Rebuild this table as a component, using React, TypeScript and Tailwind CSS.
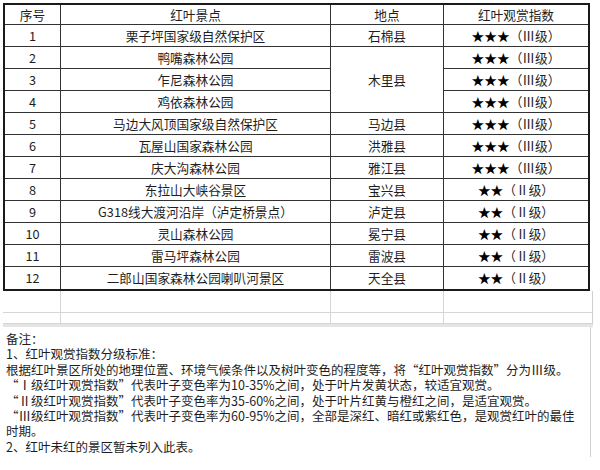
const rows: { no: number; name: string; place?: string; span?: number; stars: string; level: string }[] = [
  { no: 1, name: '栗子坪国家级自然保护区', place: '石棉县', stars: '★★★', level: 'Ⅲ' },
  { no: 2, name: '鸭嘴森林公园', place: '木里县', span: 3, stars: '★★★', level: 'Ⅲ' },
  { no: 3, name: '乍尼森林公园', stars: '★★★', level: 'Ⅲ' },
  { no: 4, name: '鸡依森林公园', stars: '★★★', level: 'Ⅲ' },
  { no: 5, name: '马边大风顶国家级自然保护区', place: '马边县', stars: '★★★', level: 'Ⅲ' },
  { no: 6, name: '瓦屋山国家森林公园', place: '洪雅县', stars: '★★★', level: 'Ⅲ' },
  { no: 7, name: '庆大沟森林公园', place: '雅江县', stars: '★★★', level: 'Ⅲ' },
  { no: 8, name: '东拉山大峡谷景区', place: '宝兴县', stars: '★★', level: 'Ⅱ' },
  { no: 9, name: 'G318线大渡河沿岸（泸定桥景点）', place: '泸定县', stars: '★★', level: 'Ⅱ' },
  { no: 10, name: '灵山森林公园', place: '冕宁县', stars: '★★', level: 'Ⅱ' },
  { no: 11, name: '雷马坪森林公园', place: '雷波县', stars: '★★', level: 'Ⅱ' },
  { no: 12, name: '二郎山国家森林公园喇叭河景区', place: '天全县', stars: '★★', level: 'Ⅱ' },
];

const notes = [
  '备注：',
  '1、红叶观赏指数分级标准：',
  '根据红叶景区所处的地理位置、环境气候条件以及树叶变色的程度等，将“红叶观赏指数”分为Ⅲ级。',
  '“Ⅰ级红叶观赏指数”代表叶子变色率为10-35%之间，处于叶片发黄状态，较适宜观赏。',
  '“Ⅱ级红叶观赏指数”代表叶子变色率为35-60%之间，处于叶片红黄与橙红之间，是适宜观赏。',
  '“Ⅲ级红叶观赏指数”代表叶子变色率为60-95%之间，全部是深红、暗红或紫红色，是观赏红叶的最佳',
  '时期。',
  '2、红叶未红的景区暂未列入此表。',
];

export default function App() {
  const cell = 'flex items-center justify-center border-[#333] whitespace-nowrap';

  return (
    <div className="w-[600px] h-[470px] bg-white overflow-hidden font-['Noto_Sans_CJK_SC',sans-serif] text-[#1e1e1e]">
      {/* Main table */}
      <div className="ml-[3px] mt-[3px] w-[587px] border-2 border-[#1a1a1a] grid grid-cols-[56px_270px_113px_1fr] grid-rows-[20px_repeat(12,22px)] text-[12.7px]">
        <div className={`${cell} border-r border-b`}>序号</div>
        <div className={`${cell} border-r border-b`}>红叶景点</div>
        <div className={`${cell} border-r border-b`}>地点</div>
        <div className={`${cell} border-b`}>红叶观赏指数</div>

        {rows.map((r, i) => {
          const last = i === rows.length - 1;
          const b = last ? '' : 'border-b';
          return [
            <div key={`n${r.no}`} className={`${cell} border-r ${b}`}>{r.no}</div>,
            <div key={`s${r.no}`} className={`${cell} border-r ${b}`}>{r.name}</div>,
            r.place ? (
              <div
                key={`p${r.no}`}
                className={`${cell} border-r ${b} ${r.span === 3 ? 'row-span-3' : ''}`}
              >
                {r.place}
              </div>
            ) : null,
            <div key={`x${r.no}`} className={`${cell} ${b}`}>
              <span className="text-black">{r.stars}</span>
              <span>（{r.level}级）</span>
            </div>,
          ];
        })}
      </div>

      {/* Empty sheet rows below the table */}
      <div className="ml-[3px] w-[590px] grid grid-cols-[58px_270px_113px_1fr] grid-rows-[22px_11px] border-r border-[#cfcfcf]">
        {Array.from({ length: 8 }).map((_, i) => (
          <div
            key={i}
            className={`border-b border-[#d6d6d6] ${i % 4 === 3 ? '' : 'border-r'}`}
          />
        ))}
      </div>
      <div className="ml-[3px] w-[590px] h-[3px] bg-[#e4e4e4]" />

      {/* Notes */}
      <div className="w-[591px] h-[130px] border-r border-[#cfcfcf] pl-[6px] pt-[4px] text-[12.5px] leading-[15.4px]">
        {notes.map((t, i) => (
          <div key={i} className="whitespace-nowrap">
            {t}
          </div>
        ))}
      </div>
    </div>
  );
}
